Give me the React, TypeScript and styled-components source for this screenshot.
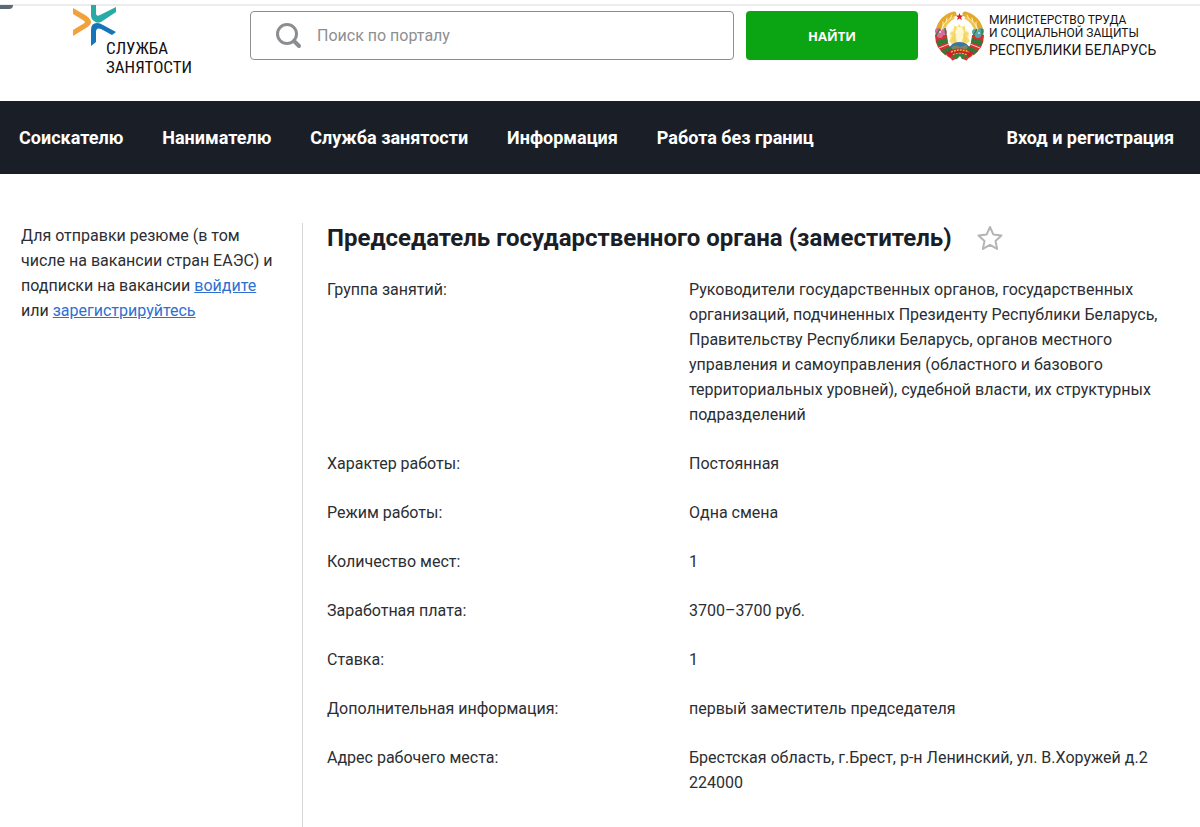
import React from 'react';
import styled, { createGlobalStyle } from 'styled-components';

const GlobalStyle = createGlobalStyle`
  * { box-sizing: border-box; }
  body {
    margin: 0;
    background: #fff;
    color: #2b2e33;
    font: 400 16px/25px Roboto, "Noto Sans", sans-serif;
  }
`;

const Page = styled.div`
  display: flex;
  flex-direction: column;
  min-height: 100vh;
`;

const TopEdge = styled.div`
  height: 8px;
  padding-top: 4px;
`;

const TopLine = styled.div`
  height: 2px;
  background: #ececec;
`;

const TabCorner = styled.div`
  position: absolute;
  top: 5px;
  left: 0;
  width: 13px;
  height: 4px;
  background: #5f6877;
  border-bottom-right-radius: 4px;
`;

const Header = styled.header`
  display: flex;
  align-items: flex-start;
  height: 93px;
  padding: 3px 38px 0 0;
`;

const Logo = styled.a`
  display: block;
  flex: 0 0 250px;
  margin-top: -6px;
  padding-left: 73px;
  color: #111;
  text-decoration: none;
`;

const LogoMark = styled.svg`
  display: block;
  width: 44px;
  height: 41px;
`;

const LogoText = styled.span`
  display: block;
  margin: -7px 0 0 33px;
  font: 400 17px/19px "Liberation Sans Narrow", "Roboto Condensed", Roboto, sans-serif;
`;

const SearchForm = styled.form`
  display: flex;
  flex: 1;
  gap: 12px;
`;

const SearchBox = styled.label`
  display: flex;
  flex: 1;
  align-items: center;
  gap: 15px;
  height: 49px;
  padding-left: 24px;
  border: 1px solid #8c8e91;
  border-radius: 4px;
`;

const SearchInput = styled.input`
  flex: 1;
  min-width: 0;
  padding: 0;
  border: 0;
  outline: 0;
  background: transparent;
  color: #2b2e33;
  font: 400 16px/24px Roboto, "Noto Sans", sans-serif;
  &::placeholder { color: #8d8f92; opacity: 1; }
`;

const SearchButton = styled.button`
  flex: 0 0 172px;
  height: 49px;
  border: 0;
  border-radius: 4px;
  background: #0ba413;
  color: #fff;
  font: 700 13px/20px "Open Sans", "Noto Sans", sans-serif;
`;

const Ministry = styled.a`
  display: flex;
  flex: 0 0 228px;
  gap: 4px;
  margin-left: 16px;
  color: #151515;
  text-decoration: none;
  white-space: nowrap;
`;

const Emblem = styled.svg`
  width: 51px;
  height: 50px;
`;

const MinistryText = styled.span`
  display: flex;
  flex-direction: column;
  padding-top: 3px;
  font-size: 12px;
  line-height: 13px;
`;

const Country = styled.span`
  font-size: 14px;
  line-height: 20px;
`;

const Nav = styled.nav`
  display: flex;
  align-items: center;
  gap: 39px;
  height: 73px;
  padding: 0 26px 1px 19px;
  background: #1a1f27;
`;

const NavLink = styled.a<{ $end?: boolean }>`
  margin-left: ${({ $end }) => ($end ? 'auto' : '0')};
  color: #fff;
  font-size: 18px;
  font-weight: 700;
  text-decoration: none;
  white-space: nowrap;
`;

const Content = styled.div`
  display: flex;
  flex: 1;
  padding-top: 49px;
`;

const Sidebar = styled.aside`
  flex: 0 0 303px;
  padding: 0 20px 0 21px;
  border-right: 1px solid #d3d5d8;
`;

const Note = styled.p`
  margin: 0;
`;

const TextLink = styled.a`
  color: #2f6fd0;
  text-decoration: underline;
`;

const Vacancy = styled.main`
  flex: 1;
  padding: 0 24px;
`;

const TitleRow = styled.div`
  display: flex;
  align-items: center;
  gap: 24px;
  height: 31px;
`;

const Title = styled.h1`
  margin: 0;
  color: #1a1f27;
  font-size: 24px;
  line-height: 31px;
`;

const StarButton = styled.button`
  display: flex;
  padding: 0;
  border: 0;
  background: transparent;
`;

const Details = styled.dl`
  display: grid;
  grid-template-columns: 362px 1fr;
  row-gap: 24px;
  margin: 23px 0 0;
`;

const Value = styled.dd`
  margin: 0;
`;

const navItems = ['Соискателю', 'Нанимателю', 'Служба занятости', 'Информация', 'Работа без границ'];

const details: [string, string][] = [
  [
    'Группа занятий:',
    'Руководители государственных органов, государственных организаций, подчиненных Президенту Республики Беларусь, Правительству Республики Беларусь, органов местного управления и самоуправления (областного и базового территориальных уровней), судебной власти, их структурных подразделений',
  ],
  ['Характер работы:', 'Постоянная'],
  ['Режим работы:', 'Одна смена'],
  ['Количество мест:', '1'],
  ['Заработная плата:', '3700–3700 руб.'],
  ['Ставка:', '1'],
  ['Дополнительная информация:', 'первый заместитель председателя'],
  ['Адрес рабочего места:', 'Брестская область, г.Брест, р-н Ленинский, ул. В.Хоружей д.2 224000'],
];

const EmblemArt = () => (
  <Emblem viewBox="0 0 51 50" aria-hidden="true">
    <g fill="none" strokeLinecap="round">
      <path d="M20 3C9 6 3 15 4 26" stroke="#e3a92c" strokeWidth="5" />
      <path d="M31 3C42 6 48 15 47 26" stroke="#e3a92c" strokeWidth="5" />
      <path d="M19 7C13 10 10 15 9 21" stroke="#f0c558" strokeWidth="3" />
      <path d="M32 7C38 10 41 15 42 21" stroke="#f0c558" strokeWidth="3" />
      <path d="M18 4l-2 4M13 7l-1 4M9 11v4M33 4l2 4M38 7l1 4M42 11v4" stroke="#fff0b4" strokeWidth="1" />
    </g>
    <circle cx="25.500" cy="25" r="10" fill="#fff3b8" />
    <path d="M25 13l2 3 4-1v5l4 2-2 4 3 4-5 4H19l-4-4 3-5-2-3 4-2v-5l4 1z" fill="#f5dc72" />
    <path d="M23 16h5l2 5-2 10h-5l-2-9z" fill="#fff7cf" />
    <path d="M21 22l-1 9M30 22l1 9M18 26l2 5M33 26l-2 5" stroke="#efcf62" strokeWidth="1" />
    <path d="M15 39a10.500 8 0 0 1 21 0z" fill="#3975a9" />
    <path d="M17 37c3-3 6-3 9-1l6-2 3 4-4 3H18z" fill="#798565" />
    <g>
      <path d="M1 24q0 14 12 21l6 4 3-6q-9-6-9-19z" fill="#d8302f" />
      <path d="M50 24q0 14-12 21l-6 4-3-6q9-6 9-19z" fill="#d8302f" />
      <path d="M2 30l11-3 1 4-10 4zM7 40l9-5 3 4-8 5z" fill="#2e7b3a" />
      <path d="M49 30l-11-3-1 4 10 4zM44 40l-9-5-3 4 8 5z" fill="#2e7b3a" />
      <path d="M5 37l10-4M11 45l7-4M46 37l-10-4M40 45l-7-4" stroke="#f1d6c5" strokeWidth="1" />
    </g>
    <path d="M11 42q14-9 29 0l-5 4q-9-6-19 0z" fill="#c9222c" />
    <path d="M17 41q9-4 18 0M19 44q7-3 14 0" fill="none" stroke="#f1be31" strokeWidth="1.500" strokeDasharray="2 1" />
    <path d="M17 45q8-5 17 0l-2 4-4-1-2-3-3 3-5 1z" fill="#30833e" />
    <path d="M21 46l-3 3M30 46l3 3" stroke="#d8302f" strokeWidth="2" />
    <g fill="#d96b9c">
      <circle cx="4" cy="20" r="3" />
      <circle cx="10" cy="21" r="3" />
      <circle cx="6" cy="24" r="3" />
    </g>
    <g fill="#55a4ad">
      <circle cx="41" cy="21" r="3" />
      <circle cx="47" cy="20" r="3" />
      <circle cx="44" cy="24" r="3" />
    </g>
    <path d="M2 24l4-6M11 17l1 8M39 25l4-7M48 18v7" stroke="#398044" strokeWidth="1.500" />
    <circle cx="6" cy="21" r="1" fill="#f8dbe7" />
    <circle cx="45" cy="22" r="1" fill="#c3e4ef" />
    <path d="M25.500 2l1 2.600h2.800l-2.200 1.700.8 2.700-2.400-1.600-2.400 1.600.8-2.700-2.200-1.700h2.800z" fill="#d61d2b" />
  </Emblem>
);

export default function App() {
  return (
    <Page>
      <GlobalStyle />
      <TopEdge>
        <TopLine />
        <TabCorner />
      </TopEdge>
      <Header>
        <Logo href="#">
          <LogoMark viewBox="0 0 44 41" aria-hidden="true">
            <path d="M0 3L13 10.500Q18 14 18 17Q18 20 13 23L0 31V25L9 19.500Q12 18 12 17Q12 16 9 14.500L0 9Z" fill="#f2a23a" />
            <path d="M18 0H23V8Q23 12 27 10L43 2V7L28 17Q24 19 21 16Q18 14 18 10Z" fill="#28aaa6" />
            <path d="M18 41V25Q18 18 24 18Q27 18 30 20L43 27L39 30L28 24Q23 22 23 27V37Z" fill="#1674b9" />
          </LogoMark>
          <LogoText>
            СЛУЖБА
            <br />
            ЗАНЯТОСТИ
          </LogoText>
        </Logo>
        <SearchForm onSubmit={(e) => e.preventDefault()}>
          <SearchBox>
            <svg width="27" height="27" viewBox="0 0 27 27" fill="none" stroke="#8b8d90" aria-hidden="true">
              <circle cx="12" cy="12" r="9.500" strokeWidth="3" />
              <path d="M19 19l5 5" strokeWidth="4" strokeLinecap="round" />
            </svg>
            <SearchInput type="search" placeholder="Поиск по порталу" aria-label="Поиск по порталу" />
          </SearchBox>
          <SearchButton type="submit">НАЙТИ</SearchButton>
        </SearchForm>
        <Ministry href="#">
          <EmblemArt />
          <MinistryText>
            <span>МИНИСТЕРСТВО ТРУДА</span>
            <span>И СОЦИАЛЬНОЙ ЗАЩИТЫ</span>
            <Country>РЕСПУБЛИКИ БЕЛАРУСЬ</Country>
          </MinistryText>
        </Ministry>
      </Header>
      <Nav>
        {navItems.map((item) => (
          <NavLink key={item} href="#">{item}</NavLink>
        ))}
        <NavLink href="#" $end>Вход и регистрация</NavLink>
      </Nav>
      <Content>
        <Sidebar>
          <Note>
            Для отправки резюме (в том числе на вакансии стран ЕАЭС) и подписки на вакансии{' '}
            <TextLink href="#">войдите</TextLink> или <TextLink href="#">зарегистрируйтесь</TextLink>
          </Note>
        </Sidebar>
        <Vacancy>
          <TitleRow>
            <Title>Председатель государственного органа (заместитель)</Title>
            <StarButton type="button" aria-label="Добавить в избранное">
              <svg width="28" height="28" viewBox="0 0 28 28" fill="none" stroke="#b5b5b5" strokeWidth="2" strokeLinejoin="round" aria-hidden="true">
                <path d="M14 2l3.300 7.400 8.200 1-6 5.500 1.600 8-7.100-4-7.100 4 1.600-8-6-5.500 8.200-1z" />
              </svg>
            </StarButton>
          </TitleRow>
          <Details>
            {details.map(([label, value]) => (
              <React.Fragment key={label}>
                <dt>{label}</dt>
                <Value>{value}</Value>
              </React.Fragment>
            ))}
          </Details>
        </Vacancy>
      </Content>
    </Page>
  );
}
